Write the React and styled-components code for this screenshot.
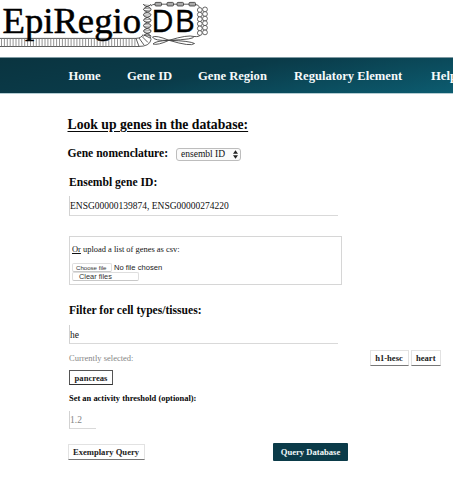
import React from 'react';
import styled, { createGlobalStyle } from 'styled-components';

const Global = createGlobalStyle`
  * { box-sizing: border-box; }
  html, body { margin: 0; background: #fff; overflow: hidden; }
  body { font-family: "Liberation Serif", serif; color: #080808; width: 453px; height: 485px; }
  button, input { font-family: inherit; border-radius: 0; margin: 0; outline: none; }
`;
const Page = styled.div`width: 453px; height: 485px; overflow: hidden; background: #fff;`;
const Header = styled.header`height: 57px;`;
const LogoSvg = styled.svg`display: block;`;
const Nav = styled.nav`
  height: 37px; display: flex; align-items: center; white-space: nowrap; padding-left: 68.5px;
  border-top: 1px solid #7f9aa2; border-bottom: 1px solid #b4cdd3;
  background: linear-gradient(170deg, #0a3440 0%, #0a3b49 45%, #0c5c70 100%);
`;
const NavLink = styled.a`
  color: #f6fafb; font-size: 12.6px; line-height: 16px; font-weight: bold; flex: none;
  width: ${p => p.$w}px;
`;
const Main = styled.main`padding: 23px 0 0 69px;`;
const Title = styled.h1`
  margin: 0 0 0 -1.5px; font-size: 13.7px; line-height: 16px; text-decoration: underline;
  text-decoration-thickness: 1px; text-underline-offset: 2px;
`;
const Row = styled.div`
  display: flex; align-items: center; height: ${p => p.$h}px; margin-top: ${p => p.$mt || 0}px;
  margin-left: ${p => p.$ml || 0}px;
`;
const Heading = styled.h2`
  margin: ${p => p.$mt || 0}px 0 0; font-size: ${p => p.$size || 11.6}px; line-height: 16px;
  white-space: nowrap; flex: none; width: ${p => p.$w || 260}px;
`;
const Select = styled.button`
  width: 65px; height: 13px; border: 1px solid #bdbdbd; border-radius: 3px; background: #fafafa;
  padding: 0 2px 0 4px; display: flex; align-items: center; justify-content: space-between;
  font-size: 9.5px; line-height: 11px; color: #111; white-space: nowrap;
`;
const Field = styled.input`
  display: block; width: ${p => p.$w}px; height: ${p => p.$h}px; margin-top: ${p => p.$mt}px;
  border: 0; border-left: 1px solid #d2d2d2; border-bottom: 1px solid #d9d9d9; padding: 1px 0 0 0;
  font-size: 9.5px; color: #111; background: #fff;
  &::placeholder { color: #858585; opacity: 1; }
`;
const Upload = styled.section`
  width: 273px; height: 49px; border: 1px solid #d6d6d6; margin-top: 20px; padding: 6px 0 0 2px;
`;
const UploadText = styled.p`margin: 0 0 8px; font-size: 8.45px; line-height: 12px; color: #111;`;
const FileRow = styled.div`
  display: flex; align-items: center; height: 9px; font: 7.2px "Liberation Sans", sans-serif; white-space: nowrap;
`;
const FileButton = styled.button`
  font: ${p => p.$size}px/7px "Liberation Sans", sans-serif; width: ${p => p.$w}px; height: 9px; color: #333;
  border: 1px solid #dedede; border-bottom-color: #c8c8c8; border-radius: 2px; background: #fff;
  padding: 0 0 0 ${p => p.$pl}px; text-align: left; white-space: nowrap; display: block;
`;
const FileName = styled.span`font-size: 7.6px; margin-left: 2px; color: #222;`;
const Results = styled.div`display: flex; gap: 2px; margin-left: 236.5px;`;
const Hint = styled.span`font-size: 8.5px; color: #858585; width: 64px; white-space: nowrap; flex: none;`;
const Tag = styled.button`
  width: ${p => p.$w}px; height: ${p => p.$h || 16}px; padding: 0; flex: none; white-space: nowrap;
  border: 1px solid ${p => (p.$selected ? '#555' : '#e2e2e2')};
  border-bottom-color: ${p => (p.$selected ? '#333' : '#777')};
  background: #fff; color: #1b1b1b; font-size: 8.6px; line-height: 12px; font-weight: bold;
`;
const Primary = styled(Tag)`background: #0b3b49; border: 0; border-radius: 1px; color: #f3f8f9; margin-left: 128.5px;`;

const twists = [4, 9.4, 14.8, 20.2, 25.6, 31];
const ties = Array.from({ length: 47 }, (_, i) => 1.5 + i * 2.9);
const beads = [10, 14.6, 19.2, 23.8, 28.4, 33];

function Logo() {
  return (
    <LogoSvg width="215" height="57" viewBox="0 0 215 57">
      <g fill="none" stroke="#777" strokeWidth=".8">
        <path d="M0 38.4H136M0 46.5H138" stroke="#333" />
        {ties.map(x => <path key={x} d={`M${x} 38.4V46.5`} />)}
        <path d="M136 38.4q6-.5 7-4M138 46.5q12 0 13-7q0-3-3-5M136 38.4l3 8M139 38l5 7M142 36.5l6 6M144 35l6 3" stroke="#333" />
      </g>
      <g fill="none" stroke="#333" strokeWidth=".9">
        {twists.map((y, i) => (
          <g key={y}>
            <path d={i % 2
              ? `M151 ${y}c0 3-7.5 2.5-7.5 5.4M143.5 ${y}c0 2 7.5 3.4 7.5 5.4`
              : `M143.5 ${y}c0 3 7.5 2.5 7.5 5.4M151 ${y}c0 2-7.5 3.4-7.5 5.4`} />
            <path d={`M144 ${y + 0.9}l6.4.6M144 ${y + 4.4}l6.4.4`} strokeWidth=".5" />
          </g>
        ))}
        <path d="M151 6q1-1.8 5-1.8h38q4.5 0 6 3.6" strokeWidth=".8" />
      </g>
      <g fill="#aaa" stroke="#333" strokeWidth=".8">
        {[155, 167, 177, 189].map(x => <rect key={x} x={x} y="2.4" width="6.5" height="3.6" rx="1" />)}
      </g>
      <g fill="#fff" stroke="#444" strokeWidth=".8">
        {beads.map(y => (
          <g key={y}>
            <circle cx="199.8" cy={y} r="2.4" />
            <circle cx="205" cy={y - 0.6} r="2.4" />
          </g>
        ))}
      </g>
      <g fill="#fff" stroke="#444" strokeWidth=".9">
        <path d="M169 40.3Q156 35 152.5 37Q154 41 169 40.3ZM169 40.3Q155 41 153 44Q158 45.5 169 40.3Z" />
        <path d="M169 40.3Q188 34.5 194 36.5Q195 39.5 169 40.3ZM169 40.3Q190 41 194.5 43.5Q191 47 169 40.3Z" />
        <path d="M194 36.5q6 .5 6-1.5" fill="none" />
      </g>
      <g fill="#000" stroke="#000">
        <text x="2.5" y="33.4" fontFamily="Liberation Serif, serif" fontSize="35.5" textLength="138.5" lengthAdjust="spacingAndGlyphs" strokeWidth=".5">EpiRegio</text>
        <text x="151.2" y="32.4" fontFamily="Open Sans, sans-serif" fontSize="31" strokeWidth=".4">D</text>
        <text x="174.8" y="32.4" fontFamily="Open Sans, sans-serif" fontSize="31" strokeWidth=".4">B</text>
      </g>
    </LogoSvg>
  );
}

export default function App() {
  return (
    <Page>
      <Global />
      <Header><Logo /></Header>
      <Nav>
        <NavLink $w={58.5}>Home</NavLink>
        <NavLink $w={71}>Gene ID</NavLink>
        <NavLink $w={96}>Gene Region</NavLink>
        <NavLink $w={137}>Regulatory Element</NavLink>
        <NavLink $w={40}>Help</NavLink>
      </Nav>
      <Main>
        <Title>Look up genes in the database:</Title>
        <Row $h={16} $mt={13} $ml={-1.5}>
          <Heading $w={108.5}>Gene nomenclature:</Heading>
          <Select>ensembl ID
            <svg width="5" height="9" viewBox="0 0 5 9" fill="#222"><path d="M0 3.7L2.5 .3L5 3.7zM0 5.3H5L2.5 8.7z" /></svg>
          </Select>
        </Row>
        <Heading $mt={13}>Ensembl gene ID:</Heading>
        <Field $w={269} $h={20} $mt={5} defaultValue="ENSG00000139874, ENSG00000274220" />
        <Upload>
          <UploadText><u>Or</u> upload a list of genes as csv:</UploadText>
          <FileRow><FileButton $w={40} $size={6.1} $pl={3}>Choose file</FileButton><FileName>No file chosen</FileName></FileRow>
          <FileButton $w={67} $size={7.4} $pl={6}>Clear files</FileButton>
        </Upload>
        <Heading $mt={18}>Filter for cell types/tissues:</Heading>
        <Field $w={269} $h={19} $mt={6} defaultValue="he" />
        <Row $h={16} $mt={6}>
          <Hint>Currently selected:</Hint>
          <Results><Tag $w={39}>h1-hesc</Tag><Tag $w={30.5}>heart</Tag></Results>
        </Row>
        <Row $h={15} $mt={4}><Tag $selected $w={44} $h={15}>pancreas</Tag></Row>
        <Heading $size={8.45} $mt={5}>Set an activity threshold (optional):</Heading>
        <Field $w={27} $h={18} $mt={5} placeholder="1.2" />
        <Row $h={18} $mt={14} $ml={-1.5}>
          <Tag $w={77}>Exemplary Query</Tag>
          <Primary $w={75} $h={18}>Query Database</Primary>
        </Row>
      </Main>
    </Page>
  );
}
